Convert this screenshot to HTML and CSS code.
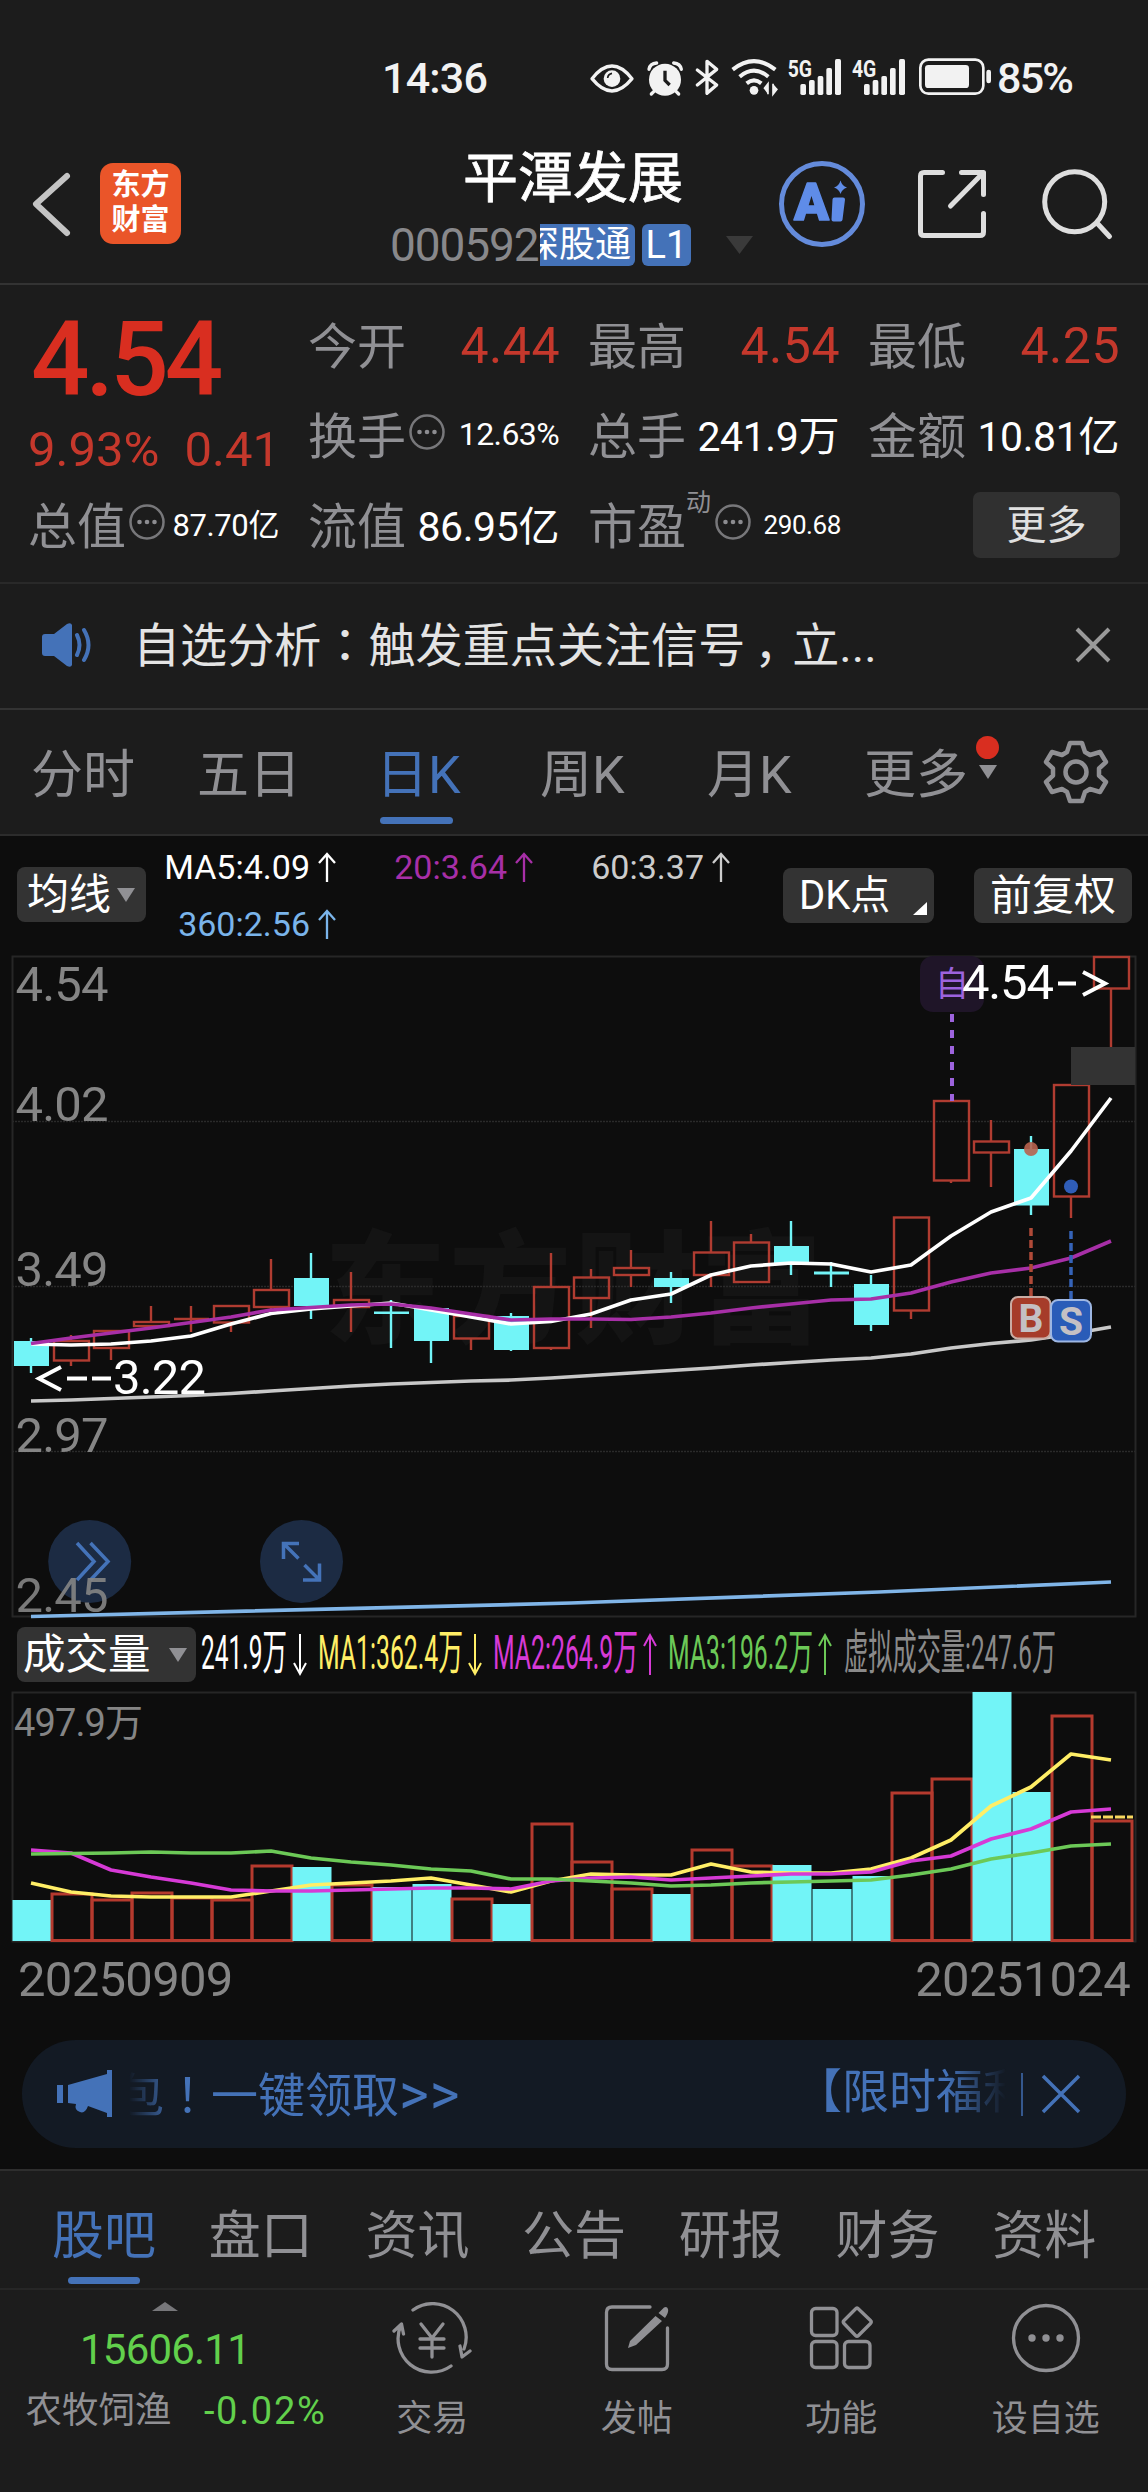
FILE: index.html
```html
<!DOCTYPE html>
<html lang="zh-CN">
<head>
<meta charset="utf-8">
<title>平潭发展 000592</title>
<link rel="stylesheet" href="styles.css">
</head>
<body>
<div class="status">
  <span class="status-time">14:36</span>
  <svg class="status-icons" viewBox="0 0 1275 192" width="425" height="64">
    <g fill="none" stroke="#f2f2f2" stroke-width="10">
      <path d="M66 98Q126 22 186 98Q126 172 66 98Z" stroke-linejoin="round"/>
    </g>
    <circle cx="126" cy="98" r="25" fill="#f2f2f2"/>
    <path d="M113 96Q114 84 126 82" fill="none" stroke="#1c1c1c" stroke-width="5"/>
    <circle cx="285" cy="101" r="48" fill="#f2f2f2"/>
    <g fill="none" stroke="#f2f2f2" stroke-width="10" stroke-linecap="round">
      <path d="M237 70Q240 52 260 51M311 51Q331 53 334 70M252 136L244 144M318 136L326 144"/>
    </g>
    <path d="M285 74V103L299 117" fill="none" stroke="#1c1c1c" stroke-width="10"/>
    <path d="M382 72L440 117L411 142V46L440 70L382 117" fill="none" stroke="#f2f2f2" stroke-width="10" stroke-linejoin="round" stroke-linecap="round"/>
    <g fill="none" stroke="#f2f2f2" stroke-width="12">
      <path d="M488 71Q552 20 616 71M509 92Q552 56 595 92M530 112Q552 94 574 112"/>
    </g>
    <circle cx="552" cy="133" r="13" fill="#f2f2f2"/>
    <path d="M582 128L594 113V145M622 128L609 145V113" fill="#f2f2f2" stroke="#f2f2f2" stroke-width="5"/>
    <text x="653" y="92" class="net" textLength="73" lengthAdjust="spacingAndGlyphs">5G</text>
    <text x="846" y="92" class="net" textLength="73" lengthAdjust="spacingAndGlyphs">4G</text>
    <g fill="#f2f2f2">
      <rect x="691" y="114" width="17" height="33" rx="5"/><rect x="717" y="102" width="17" height="45" rx="5"/><rect x="743" y="90" width="17" height="57" rx="5"/><rect x="769" y="66" width="17" height="81" rx="5"/><rect x="795" y="39" width="18" height="108" rx="5"/>
      <rect x="882" y="114" width="17" height="33" rx="5"/><rect x="908" y="102" width="17" height="45" rx="5"/><rect x="934" y="90" width="17" height="57" rx="5"/><rect x="960" y="66" width="17" height="81" rx="5"/><rect x="987" y="39" width="18" height="108" rx="5"/>
      <rect x="1065" y="57" width="132" height="69" rx="10"/><rect x="1249" y="71" width="14" height="41" rx="7"/>
    </g>
    <rect x="1051" y="41" width="189" height="102" rx="24" fill="none" stroke="#f2f2f2" stroke-width="8"/>
  </svg>
  <span class="status-battery">85%</span>
</div>

<header class="header">
  <div class="header-left">
    <svg width="44" height="72" viewBox="0 0 44 72"><path d="M38 8L7 36L38 65" fill="none" stroke="#c4c4c4" stroke-width="6" stroke-linecap="round" stroke-linejoin="round"/></svg>
    <div class="logo">东方<br>财富</div>
  </div>
  <div class="header-mid">
    <h1>平潭发展</h1>
    <div class="code-row">
      <span class="code">000592</span><span class="badge badge-clip"><span>深股通</span></span><span class="badge badge-l1">L1</span>
      <svg class="code-caret" width="27" height="18"><path d="M0 0H27L13.500 18Z" fill="#3a3a3a"/></svg>
    </div>
  </div>
  <div class="header-right">
    <svg width="88" height="88" viewBox="778 160 88 88">
      <circle cx="822" cy="204" r="40.500" fill="none" stroke="#648bdb" stroke-width="5"/>
      <text class="ai" x="794" y="219.500" textLength="35" lengthAdjust="spacingAndGlyphs">A</text>
      <path d="M834.500 199.500H843L840.500 219.500H833.500Z" fill="#5f8ce8" stroke="#5f8ce8" stroke-width="4" stroke-linejoin="round"/>
      <path d="M840.500 180.500Q842 186 847 187.500Q842 189 840.500 194Q839 189 834 187.500Q839 186 840.500 180.500Z" fill="#5f8ce8"/>
    </svg>
    <svg class="share" width="72" height="72" viewBox="916 168 72 72"><g fill="none" stroke="#dedede" stroke-width="5" stroke-linecap="round" stroke-linejoin="round"><path d="M942.500 172.500H924Q920.500 172.500 920.500 176V232Q920.500 235.500 924 235.500H980Q983.500 235.500 983.500 232V213.500M961.500 172.500H983.500V194.500M983 173L950.500 206"/></g></svg>
    <svg width="74" height="74" viewBox="1040 166 74 74"><g fill="none" stroke="#dedede" stroke-width="5" stroke-linecap="round"><circle cx="1074.700" cy="200.700" r="30"/><path d="M1097 222L1109.500 235.500"/></g></svg>
  </div>
</header>

<section class="quote">
  <div class="price">
    <div class="price-now">4.54</div>
    <div class="price-chg"><span>9.93%</span><span>0.41</span></div>
  </div>
  <div class="cell"><span class="lbl">今开</span><span class="val up">4.44</span></div>
  <div class="cell"><span class="lbl">最高</span><span class="val up">4.54</span></div>
  <div class="cell"><span class="lbl">最低</span><span class="val up">4.25</span></div>
  <div class="cell"><span class="lbl">换手</span><svg class="tip" width="36" height="36" viewBox="0 0 36 36"><use href="#tip"/></svg><span class="val s32">12.63%</span></div>
  <div class="cell"><span class="lbl">总手</span><span class="val">241.9万</span></div>
  <div class="cell"><span class="lbl">金额</span><span class="val">10.81亿</span></div>
  <div class="cell"><span class="lbl">总值</span><svg class="tip" width="36" height="36" viewBox="0 0 36 36"><use href="#tip"/></svg><span class="val s31">87.70亿</span></div>
  <div class="cell"><span class="lbl">流值</span><span class="val">86.95亿</span></div>
  <div class="cell"><span class="lbl">市盈</span><span class="sup">动</span><svg class="tip pe" width="36" height="36" viewBox="0 0 36 36"><g id="tip"><circle cx="18" cy="18" r="16.500" fill="none" stroke="#77777a" stroke-width="2.500"/><g fill="#8c8c90"><circle cx="10.500" cy="18" r="2.300"/><circle cx="18" cy="18" r="2.300"/><circle cx="25.500" cy="18" r="2.300"/></g></g></svg><span class="val s26">290.68</span></div>
  <div class="cell"><button class="more">更多</button></div>
</section>

<section class="notice">
  <svg width="54" height="46" viewBox="0 0 54 46"><path d="M1 15Q1 12 4 12H13L26 2Q30 0 31 3V43Q30 46 26 44L13 34H4Q1 34 1 31Z" fill="#4472b8"/><path d="M36 13Q41 23 36 33M43 8Q52 23 43 38" fill="none" stroke="#4472b8" stroke-width="4" stroke-linecap="round"/></svg>
  <p>自选分析<span class="tc" lang="zh-TW">：</span>触发重点关注信号<span class="comma">，</span>立...</p>
  <svg width="38" height="38" viewBox="0 0 38 38"><path d="M3 3L35 35M35 3L3 35" stroke="#9a9a9a" stroke-width="4" fill="none"/></svg>
</section>

<nav class="periods">
  <a>分时</a><a>五日</a><a class="on">日K</a><a>周K</a><a>月K</a>
  <a class="has-dot">更多<svg class="caret" width="18" height="14"><path d="M0 0H18L9 14Z" fill="#909094"/></svg><i class="dot"></i></a>
  <svg class="gear" width="66" height="66" viewBox="-33 -33 66 66"><g fill="none" stroke="#909094" stroke-width="4.500" stroke-linejoin="round"><path d="M-6 -29H6L9 -20L14 -17L24 -20L30 -10L23 -3.500V3.500L30 10L24 20L14 17L9 20L6 29H-6L-9 20L-14 17L-24 20L-30 10L-23 3.500V-3.500L-30 -10L-24 -20L-14 -17L-9 -20Z"/><circle r="10.500"/></g></svg>
</nav>

<section class="ma-bar">
  <button class="chip chip-ma">均线<svg width="18" height="14"><path d="M0 0H18L9 14Z" fill="#909094"/></svg></button>
  <div class="ma-list">
    <span class="c-white">MA5:4.09<svg class="arr"><use href="#up"/></svg></span>
    <span class="c-purple">20:3.64<svg class="arr"><use href="#up"/></svg></span>
    <span class="c-gray">60:3.37<svg class="arr"><use href="#up"/></svg></span>
    <span class="c-blue">360:2.56<svg class="arr"><g id="up"><path d="M9 30V2M1 11L9 2L17 11" fill="none" stroke="currentColor" stroke-width="2.300"/></g></svg></span>
  </div>
  <button class="chip chip-dk">DK点<svg width="14" height="13"><path d="M14 0V13H0Z" fill="#fff"/></svg></button>
  <button class="chip chip-fq">前复权</button>
</section>

<svg class="chart" viewBox="0 950 1148 672" width="1148" height="672">
  <text class="mark" x="324" y="1333" textLength="498">东方财富</text>
  <g class="grid"><path d="M12 1121.500H1136M12 1286.500H1136M12 1451.500H1136"/></g>
  <path class="frame" d="M12.500 956.500H1135.500V1616.500H12.500Z"/>
  <g fill="#1c2b43"><circle cx="89.700" cy="1561.500" r="41.500"/><circle cx="301.500" cy="1561.500" r="41.500"/></g>
  <g fill="none" stroke="#4473b9" stroke-width="3.500">
    <path d="M77 1543L94 1561.500L77 1580M90.500 1543L108 1561.500L90.500 1580"/>
    <path d="M299 1543.500H283.500V1559M284 1544L298.500 1558.500M303 1580H319.500V1563.500M319 1579.500L304.500 1565"/>
  </g>
  <g class="axis">
    <text x="15.500" y="1001" textLength="93">4.54</text>
    <text x="15.500" y="1121" textLength="93">4.02</text>
    <text x="15.500" y="1286" textLength="93">3.49</text>
    <text x="15.500" y="1452" textLength="93">2.97</text>
    <text x="15.500" y="1612" textLength="93" fill-opacity=".9">2.45</text>
  </g>
  <g id="candles"></g>
  <rect x="1071" y="1047" width="64" height="38" fill="#333"/>
  <g id="price-lines"></g>
  <rect x="920" y="956" width="64" height="56" rx="13" fill="#1f1528"/>
  <text x="935" y="996" font-size="34" fill="#9d63dd">自</text>
  <path d="M952 1014V1101" stroke="#9d63dd" stroke-width="4" stroke-dasharray="8 8"/>
  <g class="extreme">
    <text x="962" y="999" textLength="92">4.54</text>
    <path d="M1058 983.500H1076M1083 972L1105 983.500L1083 995"/>
    <path d="M61 1367L39 1378.500L61 1390M67 1378.500H87M92 1378.500H111"/>
    <text x="113" y="1394" textLength="93">3.22</text>
  </g>
  <circle cx="1031" cy="1149" r="7" fill="#b8624e" fill-opacity=".9"/>
  <circle cx="1071" cy="1186.500" r="7" fill="#2f5db8"/>
  <path d="M1031 1228V1296" stroke="#b04a38" stroke-width="3.500" stroke-dasharray="8 4"/>
  <path d="M1071 1231V1299" stroke="#3563b8" stroke-width="3.500" stroke-dasharray="8 4"/>
  <g class="trade">
    <rect x="1011" y="1297" width="39.500" height="41.500" rx="7" fill="#a63c2a" stroke="#c9aca4"/>
    <text x="1031" y="1332">B</text>
    <rect x="1051" y="1300" width="40" height="41.500" rx="7" fill="#2a5cb8" stroke="#9db6e2"/>
    <text x="1071" y="1335">S</text>
  </g>
</svg>

<section class="vol-bar">
  <button class="chip chip-vol">成交量<svg width="18" height="14"><path d="M0 0H18L9 14Z" fill="#909094"/></svg></button>
  <svg class="vol-legend" viewBox="200 1622 940 66" width="940" height="66">
    <g fill="#fff" stroke="#fff"><text x="201" y="1669" textLength="86" lengthAdjust="spacingAndGlyphs">241.9万</text><path d="M300 1634V1674M294 1663L300 1674L306 1663"/></g>
    <g fill="#ffee66" stroke="#ffee66"><text x="318" y="1669" textLength="145" lengthAdjust="spacingAndGlyphs">MA1:362.4万</text><path d="M475 1634V1674M469 1663L475 1674L481 1663"/></g>
    <g fill="#d63ad6" stroke="#d63ad6"><text x="493" y="1669" textLength="145" lengthAdjust="spacingAndGlyphs">MA2:264.9万</text><path d="M650 1675V1635M644 1646L650 1635L656 1646"/></g>
    <g fill="#6cc957" stroke="#6cc957"><text x="668" y="1669" textLength="145" lengthAdjust="spacingAndGlyphs">MA3:196.2万</text><path d="M825 1675V1635M819 1646L825 1635L831 1646"/></g>
    <g fill="#8a8a8a"><text x="844" y="1669" textLength="212" lengthAdjust="spacingAndGlyphs">虚拟成交量:247.6万</text></g>
  </svg>
</section>

<svg class="chart" viewBox="0 1688 1148 262" width="1148" height="262">
  <path class="frame" d="M12.500 1692.500H1135.500V1941.500H12.500Z"/>
  <text class="vol-max" x="14" y="1736" textLength="129">497.9万</text>
  <g id="bars"></g>
  <g id="vol-lines"></g>
  <path d="M1091 1817H1133" stroke="#f8d860" stroke-width="3" stroke-dasharray="10 2"/>
</svg>

<div class="dates"><span>20250909</span><span>20251024</span></div>

<section class="promo">
  <svg width="56" height="48" viewBox="0 0 56 48"><path d="M0 15H6V33H0ZM11 15L50 4V0H55V47H50V43L31 36Q28 44 23 42Q17 40 19 34L11 33Z" fill="#4472b8"/></svg>
  <div class="marquee"><span>包<b class="tc" lang="zh-TW">！</b>一键领取<b class="go">&gt;&gt;</b></span><span class="next">【限时福利</span></div>
  <i class="divider"></i>
  <svg width="40" height="40" viewBox="0 0 40 40"><path d="M2 2L38 38M38 2L2 38" stroke="#4472b8" stroke-width="3.500"/></svg>
</section>

<nav class="tabs">
  <a class="on">股吧</a><a>盘口</a><a>资讯</a><a>公告</a><a>研报</a><a>财务</a><a>资料</a>
</nav>

<footer class="nav">
  <div class="index">
    <svg width="26" height="9"><path d="M13 0L26 9H0Z" fill="#77777a"/></svg>
    <div class="index-val">15606.11</div>
    <div class="index-row"><span>农牧饲渔</span><span class="down">-0.02%</span></div>
  </div>
  <a><svg viewBox="392 2302 80 72" width="80" height="72"><g class="ln"><path d="M413 2310A33.500 33.500 0 0 1 464 2349M451 2366A33.500 33.500 0 0 1 401 2325M394 2331L401.500 2324L403.500 2334M470 2351L462 2357L460 2346"/><path d="M421 2324L432 2338L443 2324M432 2338V2357M420 2339H444M420 2348H444"/></g></svg><span>交易</span></a>
  <a><svg viewBox="600 2302 72 72" width="72" height="72"><g class="ln"><path d="M649 2307H611Q605.500 2307 605.500 2312.500V2364Q605.500 2369.500 611 2369.500H661Q666.500 2369.500 666.500 2364V2328"/></g><path d="M654.500 2316L661 2321L635 2345L627 2348L629 2341ZM657.500 2313L663 2307.500Q666 2306 667 2309Q668 2312 664 2318Z" fill="#909094"/></svg><span>发帖</span></a>
  <a><svg viewBox="804 2302 72 72" width="72" height="72"><g class="ln"><rect x="810.500" y="2308.500" width="25.500" height="27" rx="4"/><rect x="810.500" y="2341.500" width="25.500" height="26" rx="4"/><rect x="843.500" y="2341.500" width="25.500" height="26" rx="4"/><path d="M854.500 2309Q856 2307 857.500 2309L869.500 2320.500Q871 2322 869.500 2323.500L857.500 2335.500Q856 2337 854.500 2335.500L843 2323.500Q841.500 2322 843 2320.500Z"/></g></svg><span>功能</span></a>
  <a><svg viewBox="1009 2302 72 72" width="72" height="72"><g class="ln"><circle cx="1045" cy="2338" r="32.500"/></g><g fill="#909094"><circle cx="1031" cy="2338" r="3.700"/><circle cx="1045" cy="2338" r="3.700"/><circle cx="1059" cy="2338" r="3.700"/></g></svg><span>设自选</span></a>
</footer>
<script src="chart.js"></script>
</body>
</html>
```
FILE: styles.css
```css
* { box-sizing: border-box; }
body {
  margin: 0; width: 1148px; height: 2492px; background: #1c1c1c; color: #fff;
  font-family: Roboto, "Noto Sans CJK SC", sans-serif; overflow: hidden;
}
svg { display: block; flex: none; }
button { border: 0; padding: 0; margin: 0; font: inherit; color: inherit; }
h1, p { margin: 0; }
.tc { font-family: "Noto Sans CJK TC", sans-serif; font-weight: 400; }

.status { height: 124px; padding: 32px 0 0 382px; display: flex; align-items: center; color: #f2f2f2; font-size: 43px; font-weight: 500; line-height: 60px; }
.status-time { width: 188px; letter-spacing: -.8px; }
.status-battery { letter-spacing: -1.8px; margin-left: 2px; }
.net { font: 700 69px Roboto, sans-serif; fill: #f2f2f2; }

.header { height: 161px; border-bottom: 2px solid #333; display: grid; grid-template-columns: 392px 361px 1fr; }
.header-left { display: flex; align-items: center; padding-left: 29px; gap: 27px; }
.logo { width: 81px; height: 81px; border-radius: 13px; background: #ea5529; font-size: 29px; font-weight: 700; line-height: 35px; text-align: center; padding-top: 5px; }
.header-mid { display: flex; flex-direction: column; align-items: center; padding-top: 19px; }
h1 { font-size: 55px; font-weight: 400; line-height: 70px; padding-left: 1px; -webkit-text-stroke: .8px #fff; }
.code-row { margin-top: 11px; height: 42px; display: flex; align-items: center; width: 361px; }
.code { width: 148px; font-size: 46px; font-weight: 400; letter-spacing: -1.1px; color: #88888b; line-height: 42px; margin-left: -2px; margin-right: 2px; white-space: nowrap; }
.badge { background: #4472b8; height: 42px; line-height: 43px; font-size: 36px; border-radius: 6px; }
.badge-clip { width: 95px; overflow: hidden; display: flex; justify-content: flex-end; padding-right: 4px; border-radius: 0 6px 6px 0; }
.badge-clip span { flex: none; }
.badge-l1 { width: 49px; margin-left: 7px; text-align: center; font-size: 38px; }
.code-caret { margin-left: 35px; }
.header-right { display: flex; align-items: center; padding-left: 25px; }
.ai { font: 900 51px Roboto, sans-serif; fill: #5f8ce8; stroke: #5f8ce8; stroke-width: 1.500; stroke-linejoin: round; }
.share { margin: 0 52px 0 50px; }

.quote { height: 299px; padding: 14px 30px 0; border-bottom: 2px solid #292929; display: grid; grid-template-columns: repeat(4, 248px); grid-template-rows: repeat(3, 90px); column-gap: 32px; }
.price { grid-row: span 2; color: #d92e20; padding-top: 4px; }
.price-now { font-size: 103px; font-weight: 500; line-height: 114px; letter-spacing: -4px; margin-left: 1px; }
.price-chg { display: flex; gap: 25px; font-size: 49px; line-height: 66px; color: #c5382c; white-space: nowrap; margin-left: -2px; }
.cell { display: flex; align-items: center; position: relative; padding-bottom: 3px; }
.lbl { color: #909094; font-size: 49px; margin-left: -2px; }
.val { margin: 0 -1px 0 auto; font-size: 41px; letter-spacing: -.4px; white-space: nowrap; }
.val.up { color: #c5382c; font-size: 50px; letter-spacing: .5px; padding-top: 7px; margin-right: -2px; }
.val.s32 { font-size: 32px; letter-spacing: -.6px; padding-top: 2px; }
.val.s31 { font-size: 31px; }
.val.s26 { font-size: 26px; margin-right: -3px; padding-top: 5px; }
.tip { margin: -2px 0 0 3px; }
.sup { font-size: 25px; color: #909094; align-self: flex-start; line-height: 26px; margin-top: 11px; }
.tip.pe { margin-left: 4px; }
.more { margin: 5px -2px 0 auto; width: 147px; height: 66px; border-radius: 7px; background: #303030; color: #e0e0e0; font-size: 40px; padding-bottom: 6px; }

.notice { height: 126px; border-bottom: 2px solid #333; padding: 0 36px 2px 41px; display: flex; align-items: center; }
.notice p { flex: 1; margin: -8px 0 0 38px; font-size: 47.100px; color: #e4e4e4; white-space: nowrap; }
.notice .comma { display: inline-block; width: 47px; text-indent: 9px; }

.periods { height: 126px; border-bottom: 2px solid #2c2c2c; padding-left: 31px; display: grid; grid-template-columns: 166px 179px 164px 167px 157px 179px 1fr; align-items: center; font-size: 52px; color: #909094; }
.periods a { position: relative; height: 124px; padding-bottom: 3px; display: flex; align-items: center; }
.periods .on { color: #4472b8; }
.periods .on::after { content: ""; position: absolute; left: 4px; bottom: 10px; width: 73px; height: 7px; border-radius: 4px; background: #4472b8; }
.caret { margin: 3px 0 0 11px; }
.dot { position: absolute; left: 112px; top: 26px; width: 23px; height: 23px; border-radius: 50%; background: #d92e20; }

.ma-bar, .chart, .vol-bar, .dates { background: #0d0d0d; }
.ma-bar { height: 114px; display: flex; position: relative; }
.chip { background: #333; border-radius: 8px; height: 55px; display: flex; align-items: center; font-size: 41px; line-height: 52px; }
.chip-ma { width: 129px; margin: 31px 0 0 17px; padding-left: 10px; gap: 6px; font-size: 42px; }
.ma-list { margin: 13px 0 0 0; width: 586px; display: grid; grid-template-columns: 190px 197px 197px; grid-template-rows: 57px 34px; align-content: start; font-size: 34px; line-height: 36px; }
.ma-list span { display: flex; justify-content: flex-end; align-items: center; height: 36px; }
.arr { width: 18px; height: 31px; margin-left: 8px; }
.c-white { color: #fff; }
.c-purple { color: #a72fa7; }
.c-gray { color: #ccc; }
.c-blue { color: #7ab4ea; }
.chip-dk { width: 151px; margin: 32px 0 0 51px; padding: 0 7px 0 16px; font-size: 40px; justify-content: space-between; }
.chip-dk svg { align-self: flex-end; margin-bottom: 8px; }
.chip-fq { width: 158px; margin: 32px 0 0 40px; justify-content: center; font-size: 42px; }

.frame { fill: none; stroke: #262626; stroke-width: 2; }
.grid path { stroke: #2a2a2a; stroke-width: 1.500; stroke-dasharray: 2 1; }
.mark { font: 900 122px "Noto Sans CJK SC", sans-serif; fill: #141414; }
.axis text { font-size: 49px; fill: #858585; }
.extreme text { font-size: 49px; fill: #fff; }
.extreme path { fill: none; stroke: #fff; stroke-width: 4; }
.trade rect { stroke-width: 2; }
.trade text { font-size: 39px; font-weight: 700; fill: #c4c0c4; text-anchor: middle; }
.line { fill: none; stroke-width: 3.700; stroke-linejoin: round; }

.vol-bar { height: 66px; display: flex; }
.chip-vol { width: 179px; margin: 5px 4px 0 17px; padding-left: 6px; font-size: 42.500px; gap: 18px; }
.vol-legend text { font-size: 48px; stroke: none; }
.vol-legend path { fill: none; stroke-width: 2; }
.vol-max { font-size: 38px; fill: #858585; }
.dates { height: 60px; padding: 0 18px; display: flex; justify-content: space-between; font-size: 49px; line-height: 60px; letter-spacing: -.7px; color: #858585; }

.promo { position: relative; z-index: 0; height: 108px; margin: 30px 22px 21px; display: flex; align-items: center; padding-left: 35px; color: #4472b8; }
.promo::before { content: ""; position: absolute; inset: -30px -22px -21px; background: #0d0d0d; z-index: -2; }
.promo::after { content: ""; position: absolute; inset: 0; border-radius: 54px; background: #131a24; z-index: -1; }
.marquee { width: 877px; margin-left: 16px; height: 60px; line-height: 56px; font-size: 47px; overflow: hidden; display: flex; justify-content: space-between; white-space: nowrap; -webkit-mask-image: linear-gradient(90deg, transparent, #000 46px, #000 817px, transparent); mask-image: linear-gradient(90deg, transparent, #000 46px, #000 817px, transparent); }
.marquee span:first-child { margin-left: -12px; }
.marquee .next { margin-right: -24px; }
.go { font-weight: 400; font-size: 57px; line-height: 40px; letter-spacing: 1px; vertical-align: -2px; }
.divider { width: 2px; height: 43px; background: #35588e; margin: 0 18px 0 15px; }

.tabs { height: 121px; border-top: 2px solid #2e2e2e; border-bottom: 2px solid #262626; padding-left: 52px; display: grid; grid-template-columns: repeat(7, 156.700px); grid-template-rows: 117px; font-size: 52px; color: #909094; line-height: 131px; }
.tabs a { position: relative; height: 117px; }
.tabs .on { color: #4472b8; }
.tabs .on::after { content: ""; position: absolute; left: 16px; bottom: 4px; width: 72px; height: 7px; border-radius: 4px; background: #4472b8; }

.nav { height: 202px; display: grid; grid-template-columns: 330px repeat(4, 204.500px); color: #909094; font-size: 36px; }
.nav a { display: flex; flex-direction: column; align-items: center; padding-top: 12px; }
.nav a span { line-height: 44px; margin-top: 23px; }
.ln { fill: none; stroke: #909094; stroke-width: 3.300; stroke-linecap: round; stroke-linejoin: round; }
.index { padding-top: 12px; display: flex; flex-direction: column; align-items: center; color: #909094; }
.index-val { color: #62d04c; font-size: 42px; line-height: 50px; margin-top: 14px; letter-spacing: -.8px; }
.index-row { display: flex; align-items: center; justify-content: space-between; width: 301px; margin: 14px 0 0 22px; line-height: 44px; font-size: 36.500px; }
.down { color: #62d04c; font-size: 38px; letter-spacing: 1.700px; }
```
FILE: chart.js
```js
const NS = 'http://www.w3.org/2000/svg';
const RED = '#b03c31', CYAN = '#72f4f7';
const cx = i => 31 + 40 * i;

function add(parent, name, attrs) {
  const el = document.createElementNS(NS, name);
  for (const k in attrs) el.setAttribute(k, attrs[k]);
  document.getElementById(parent).appendChild(el);
}

// [direction, high, body top, body bottom, low] in chart units
const candles = [
  ['d',1338,1341,1366,1373],['u',1335,1341,1360.5,1366],['u',1331,1331,1348,1360],['u',1306,1322,1326,1326],
  ['u',1306,1319,1319,1332],['u',1306,1306,1322.5,1332],['u',1259,1290,1307,1310],['d',1253,1278,1306,1319],
  ['u',1272,1300,1307,1332],['d',1300,1311.5,1314,1348],['d',1308,1308,1341,1363],['u',1316,1316,1338.5,1350],
  ['d',1313,1316,1350,1351],['u',1253,1287,1348,1350],['u',1269,1277.5,1298,1328],['u',1250,1268,1275,1287],
  ['d',1272,1278,1287,1303],['u',1221,1252.5,1275,1287],['u',1234,1242.5,1282,1282],['d',1221,1246,1263,1275],
  ['d',1262,1271.5,1274.5,1287],['d',1275,1284,1325,1331],['u',1217.5,1217.5,1310.5,1319],['u',1101,1101,1180.5,1183],
  ['u',1120,1141.5,1152.5,1187],['d',1136,1149,1205.5,1215],['u',1085,1085,1196.5,1218],['u',957,957,988.5,1047]
];
candles.forEach(([dir, h, t, b, l], i) => {
  const x = cx(i), up = dir === 'u';
  const color = up ? RED : CYAN;
  if (up) {
    add('candles', 'path', { d: `M${x} ${h}V${t}M${x} ${b}V${l}`, stroke: color, 'stroke-width': 2.4 });
    if (t === b) add('candles', 'path', { d: `M${x - 17} ${t}H${x + 18}`, stroke: color, 'stroke-width': 2.4 });
    else add('candles', 'rect', { x: x - 17, y: t, width: 35, height: b - t, fill: 'none', stroke: color, 'stroke-width': 2.4 });
  } else {
    add('candles', 'path', { d: `M${x} ${h}V${l}`, stroke: color, 'stroke-width': 2.4 });
    add('candles', 'rect', { x: x - 17, y: t, width: 35, height: b - t, fill: color });
  }
});

function line(parent, ys, color) {
  add(parent, 'polyline', { class: 'line', stroke: color, points: ys.map((y, i) => cx(i) + ',' + y).join(' ') });
}
line('price-lines', [1401,1400,1398.5,1397,1395.5,1393.5,1391,1388.5,1386,1384,1382.5,1381,1380,1378,1375.5,1373,1370.5,1368,1365,1362.5,1360,1358,1354,1348,1343.5,1340,1334,1327], '#c8c8c8');
line('price-lines', [1344,1345,1344,1341,1336,1324,1313.5,1309,1306,1303,1310,1317,1324,1321.5,1314,1300,1294,1275,1266,1263,1264,1272,1265,1236,1212,1198,1151,1098], '#fff');
line('price-lines', [1343.5,1338,1333,1328,1322.5,1317,1310,1307.5,1305,1304,1308,1314,1320,1319,1319,1319.5,1317,1313,1308,1304,1300,1299,1293,1282,1273,1268,1258,1241], '#a72fa7');
add('price-lines', 'polyline', { class: 'line', stroke: '#80b5e8', points: '31,1616.5 571,1603 879,1592 1111,1582' });

const volumes = [
  ['d',1900],['u',1894],['u',1900],['u',1893],['u',1898],['u',1900],['u',1866],['d',1867],['u',1885],['d',1887],
  ['d',1884],['u',1899],['d',1904],['u',1824],['u',1862],['u',1889],['d',1894],['u',1850],['u',1866],['d',1865],
  ['d',1889],['d',1876],['u',1793],['u',1779],['d',1692],['d',1792],['u',1716],['u',1821]
];
volumes.forEach(([dir, top], i) => {
  const x = cx(i);
  if (dir === 'u') add('bars', 'rect', { x: x - 19, y: top, width: 40, height: 1940.5 - top, fill: 'none', stroke: '#b53a2e', 'stroke-width': 3 });
  else add('bars', 'rect', { x: x - 18.5, y: top, width: 39, height: 1941 - top, fill: CYAN });
});
line('vol-lines', [1883,1892,1896,1897,1897,1897,1891,1885,1883,1881,1878,1885,1892,1881,1874,1875,1875,1864,1872,1873,1873,1869,1858,1840,1806,1787,1754,1760], '#ffee66');
line('vol-lines', [1850,1853,1870,1877,1883,1890,1891,1891,1890,1889,1888,1888,1889,1881,1878,1877,1880,1878,1876,1874,1874,1872,1861,1856,1839,1829,1812,1809], '#d63ad6');
line('vol-lines', [1854,1853.5,1853,1852,1853,1853,1851,1858,1862,1865,1869,1871,1879,1879,1881,1883,1886,1885,1883,1882,1881,1880,1875,1869,1859,1853,1846,1844], '#6cc957');
```
